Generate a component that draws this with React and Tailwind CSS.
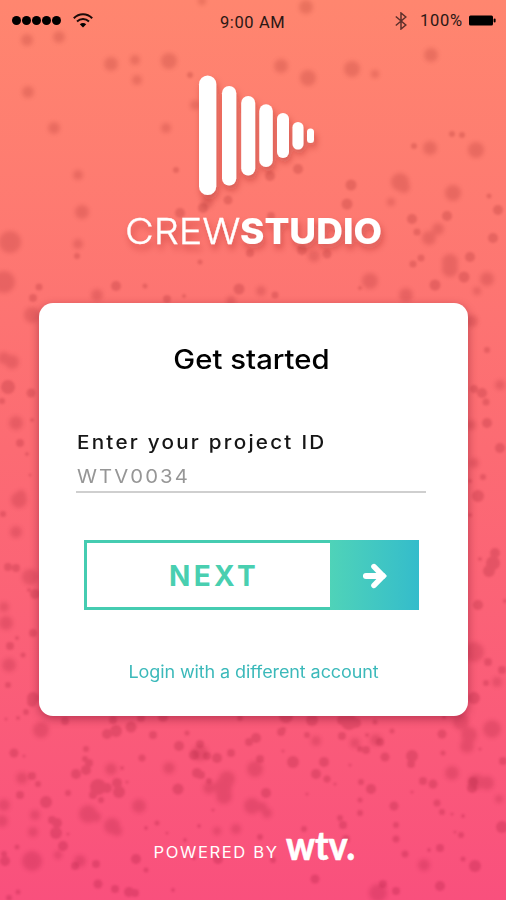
import React from "react";

// Each speck: [x, y, radius]
const softSpecks = [
  [27,40,6],[59,37,6],[111,64,7],[135,60,5],[169,61,8],[137,80,5],[28,92,6],[54,128,6],[166,128,5],[195,105,5],[202,1,4],
  [306,7,7],[281,66,7],[308,78,8],[352,69,8],[375,74,4],[431,55,7],[476,150,8],[430,148,7],
  [78,175,5],[82,212,7],[10,242,11],[78,244,5],[4,282,11],[97,295,6],[261,291,5],[231,301,5],[207,203,6],[314,256,6],
  [400,182,9],[404,187,6],[391,202,4],[453,193,8],[438,229,6],[429,238,7],[450,262,8],[450,269,8],[487,279,7],[370,281,8],[406,295,7],[477,291,4],
  [32,315,8],[12,362,7],[4,358,6],[16,423,7],[19,500,8],[21,495,5],[16,532,6],[30,577,8],[4,607,5],[6,623,7],[9,665,7],
  [472,321,6],[500,385,5],[474,463,5],[474,652,10],[497,682,5],[471,425,5],
  [41,730,8],[111,769,6],[169,768,6],[200,753,8],[223,787,9],[227,779,8],[224,796,8],[209,788,6],[255,769,8],[252,806,8],[262,807,5],[267,813,5],
  [139,806,7],[88,814,9],[96,817,5],[112,826,8],[117,831,5],[33,832,5],[35,815,5],[32,861,10],[80,861,6],[4,805,6],[2,821,6],
  [316,741,5],[355,743,5],[376,740,6],[461,722,8],[469,735,8],[467,746,7],[492,729,9],[452,773,7],[476,782,8],[487,783,7],[424,865,6],[378,893,9],[499,799,4],[22,778,6],[58,855,4],[217,831,4],[236,829,5],
];

const sharpSpecks = [
  [462,135,3],[414,146,3],[452,134,3],[190,75,3],[77,256,3],[39,287,3.5],[33,298,4],[200,262,2.5],[116,286,5],[145,286,2.5],[167,299,4],[184,296,2],[239,289,5.5],[275,295,3.5],[250,253,4],[302,250,5],[327,254,4.5],[176,170,3],[203,208,5],[180,213,5],[228,200,4.5],[271,216,4],[270,176,5],[298,169,5],[351,185,5.5],[347,204,5.5],[498,210,5],[489,196,2.5],[412,219,5],[417,232,3.5],[447,216,5],[493,238,5],[470,257,5],[421,258,3.5],[413,264,3.5],[464,277,5.5],[435,285,5.5],[360,288,2],
  [8,387,7],[31,393,4.5],[32,420,2],[2,401,3],[20,443,4],[27,454,2],[30,475,1.5],[3,514,3],[8,567,4],[16,568,4],[35,594,5],[29,590,2],[33,633,4],[17,638,2],[10,646,4],[23,655,2.5],[8,685,3],[33,698,6],
  [487,350,3],[474,389,4],[482,393,5],[486,402,3.5],[487,423,5],[500,448,5],[483,477,3],[470,481,2],[478,496,6],[470,515,2],[495,553,5],[493,563,7],[489,571,6],[480,559,2],[478,605,5],[505,601,2],[488,662,4],[502,670,4],[486,683,3],[474,698,6],
  [32,702,5],[26,712,3],[18,718,2],[6,719,1.5],[65,721,4],[113,720,4],[107,734,5],[116,731,6],[131,727,5.5],[141,718,4],[163,717,5],[153,735,4],[187,733,2.5],[179,746,5],[142,758,3.5],[240,718,3],[286,716,7],[312,720,6],[249,742,4],[256,738,5],[281,732,4],[283,730,3],[307,735,3],[342,736,4],[342,720,5],[349,722,8],[356,723,5],[375,722,2.5],[367,735,2],[392,731,2.5],[442,734,4.5],[444,717,2],[283,751,1.5],[360,749,3],[366,750,4],[380,742,4],[385,757,4.5],[412,756,6],[411,764,4],[443,753,2.5],[480,749,1.5],[503,761,4],
  [14,753,4.5],[24,756,1.5],[86,749,3],[85,759,3],[89,763,4],[86,770,5],[76,774,5],[32,776,4],[38,784,3],[20,795,4],[46,802,6],[68,793,3],[98,787,8],[107,788,5],[93,795,4],[101,800,3],[117,783,5],[119,792,6],[122,768,2],[127,782,1.5],[52,820,4],[57,823,5],[56,833,6],[68,834,1.5],
  [194,755,5],[200,744,4],[207,756,4],[217,758,5],[231,753,4],[260,759,4],[197,773,5],[201,775,4],[178,789,5.5],[209,781,3],[266,793,5],[293,762,6],[324,762,5],[316,774,5],[327,779,3.5],[335,784,1.5],[350,765,1.5],[361,782,3],[371,789,5],[307,794,1.5],[360,800,2.5],[360,813,3],[394,806,4.5],[423,781,4],[433,784,4.5],[412,792,1.5],[437,803,3.5],[442,812,3],[452,814,1.5],[463,816,2],[473,782,5],[472,788,5],[502,827,6],
  [340,818,3],[343,825,4],[396,825,3],[396,839,3.5],[405,854,3.5],[304,829,3],[199,826,2],[213,810,1.5],[157,823,2.5],[146,828,2],[167,833,1.5],[185,840,2],[260,837,3],[346,839,4],[429,850,2],[440,848,4],[455,832,1.5],[461,835,3],[463,859,2.5],[475,866,6],[440,886,5],[396,891,4],[383,884,4],[315,879,4.5],[273,860,3],[218,859,5],[194,858,2],[136,859,5],[146,870,2.5],[173,890,2],[98,884,4.5],[115,889,4],[129,892,5],[135,893,4],[96,864,4],[75,866,4],[63,846,5],[17,847,2.5],[5,861,5],[4,854,3],[18,892,2.5],[9,898,3],
];

// Logo bars: [x, y, width, height]
const bars = [
  [199,75.5,17.3,119.5],[222,86,14.3,99.5],[241.2,96,14,79.5],[259.3,104.3,13.5,62.8],[277,113,12,45],[292.5,122,11,27.5],[307,128.5,7,14.5],
];

function Backdrop() {
  return (
    <svg className="absolute inset-0 h-[900px] w-[506px]" viewBox="0 0 506 900" aria-hidden="true">
      <defs>
        <linearGradient id="speck" gradientUnits="userSpaceOnUse" x1="0" y1="0" x2="0" y2="900">
          <stop offset="0" stopColor="#a53028" />
          <stop offset="1" stopColor="#a3183c" />
        </linearGradient>
        <filter id="soft" x="-10%" y="-10%" width="120%" height="120%"><feGaussianBlur stdDeviation="1.9" /></filter>
        <filter id="crisp"><feGaussianBlur stdDeviation="0.8" /></filter>
      </defs>
      <g fill="url(#speck)" opacity="0.23" filter="url(#soft)">
        {softSpecks.map(([x, y, r], i) => <circle key={i} cx={x} cy={y} r={r} />)}
      </g>
      <g fill="url(#speck)" opacity="0.25" filter="url(#crisp)">
        {sharpSpecks.map(([x, y, r], i) => <circle key={i} cx={x} cy={y} r={r} />)}
      </g>
    </svg>
  );
}

function StatusBar() {
  return (
    <header className="flex h-10 items-start font-[Roboto,sans-serif] text-[#2b1714]">
      <div className="flex w-[220px] items-center gap-[13px] pt-[13px] pl-[11.5px]">
        <div className="flex gap-[1px]">
          {[0, 1, 2, 3, 4].map((i) => <span key={i} className="size-[9px] rounded-full bg-black" />)}
        </div>
        <svg className="-ml-px h-[15px] w-5" viewBox="0 0 20 15" fill="none" stroke="#1c0b09" strokeWidth="2">
          <path d="M.8 5.2C6-.2 14-.2 19.2 5.2" />
          <path d="M4 8.5c3.5-3.3 8.5-3.3 12 0" />
          <path d="M6.8 11.3c2-1.7 4.4-1.7 6.4 0L10 14.5Z" fill="black" stroke="none" />
        </svg>
      </div>
      <span className="w-[68px] pt-[14px] text-[16.5px] leading-[18px] tracking-[0.6px] whitespace-nowrap">9:00 AM</span>
      <div className="flex flex-1 items-center justify-end pt-[11px] pr-[10px]">
        <svg className="mr-[13px] h-[18px] w-3" viewBox="0 0 12 18" fill="none" stroke="#5e302b" strokeWidth="1.5">
          <path d="m.8 4.5 10 8.5L6 17V1l4.8 4L.8 13.5" />
        </svg>
        <span className="mr-[6px] pt-px text-[16.5px] leading-[18px] tracking-[0.8px]">100%</span>
        <svg className="h-[11px] w-[27px]" viewBox="0 0 27 11">
          <rect x="0" y="0.5" width="24" height="10" rx="1.5" />
          <rect x="24.6" y="3.5" width="2" height="4" rx="1" />
        </svg>
      </div>
    </header>
  );
}

function Logo() {
  return (
    <svg className="h-[263px] w-[506px] shrink-0" viewBox="0 40 506 263" fill="white">
      <defs>
        <filter id="logoShadow" x="-10%" y="-10%" width="120%" height="125%">
          <feDropShadow dx="2" dy="5" stdDeviation="3.5" floodColor="#8c1c1c" floodOpacity="0.36" />
        </filter>
      </defs>
      <g filter="url(#logoShadow)">
        {bars.map(([x, y, w, h]) => <rect key={x} x={x} y={y} width={w} height={h} rx={w / 2} />)}
        <text x="125" y="243.5" textLength="115.5" lengthAdjust="spacingAndGlyphs" stroke="white" strokeWidth="0.3" className="font-[Inter,sans-serif] text-[36px] font-light">CREW</text>
        <text x="240" y="243.5" textLength="142" lengthAdjust="spacingAndGlyphs" className="font-[Inter,sans-serif] text-[36px] font-extrabold">STUDIO</text>
      </g>
    </svg>
  );
}

function LoginCard() {
  return (
    <main className="mx-auto flex h-[413px] w-[429px] shrink-0 flex-col rounded-[14px] bg-white shadow-[0_3px_10px_rgba(110,10,35,0.45)]">
      <h1 className="mt-[39px] mr-[4px] origin-center scale-x-[1.085] text-center text-[27px] leading-9 font-medium text-black">Get started</h1>
      <label className="mt-[53px] ml-[38px] origin-left scale-x-[1.088] text-[19px] leading-6 font-medium tracking-[2.05px] text-[#161616]">Enter your project ID</label>
      <div className="mt-[10px] ml-[37px] h-[28px] w-[350px] border-b-2 border-[#cfcfcf] pl-[1px] text-[19px] leading-6 tracking-[2px] text-[#969696]">
        <span className="inline-block origin-left scale-x-[1.067]">WTV0034</span>
      </div>
      <button className="mt-[47px] ml-[45px] flex h-[70px] w-[335px] items-stretch">
        <span className="flex w-[246px] items-center justify-center border-[3px] border-r-0 border-[#45ccb1] pt-px pl-[12px] text-[28px] font-bold tracking-[3.3px] text-[#49cfb0]">NEXT</span>
        <span className="flex flex-1 items-center justify-center bg-linear-to-r from-[#4fd3b8] to-[#34bccb] pt-px pl-[2px]">
          <svg className="h-[26px] w-6" viewBox="0 0 24 26" fill="none" stroke="white" strokeLinecap="round">
            <path d="M2.8 13h17" strokeWidth="5.8" />
            <path d="m11 3.6 9.2 9.4L11 22.4" strokeWidth="5.6" />
          </svg>
        </span>
      </button>
      <a className="mt-[50px] origin-center scale-x-[1.06] text-center text-[17px] leading-6 tracking-[-0.1px] text-[#3bb9ba]">Login with a different account</a>
    </main>
  );
}

export default function App() {
  return (
    <div className="relative h-[900px] w-[506px] overflow-hidden bg-linear-to-b from-[#ff866f] via-[#fc6b73] to-[#f9507d] font-[Inter,'Liberation_Sans',sans-serif]">
      <Backdrop />
      <div className="relative flex h-full flex-col">
        <StatusBar />
        <Logo />
        <LoginCard />
        <footer className="h-[184px]">
          <svg className="h-[184px] w-[506px]" viewBox="0 716 506 184" fill="white">
            <text x="153.5" y="857.5" textLength="125" lengthAdjust="spacingAndGlyphs" className="font-[Inter,sans-serif] text-[15.5px] tracking-[1.5px]">POWERED BY</text>
            <text x="286" y="860" textLength="69" lengthAdjust="spacingAndGlyphs" stroke="white" strokeWidth="0.5" className="font-[Lato,sans-serif] text-[39px] font-black">wtv.</text>
          </svg>
        </footer>
      </div>
    </div>
  );
}
